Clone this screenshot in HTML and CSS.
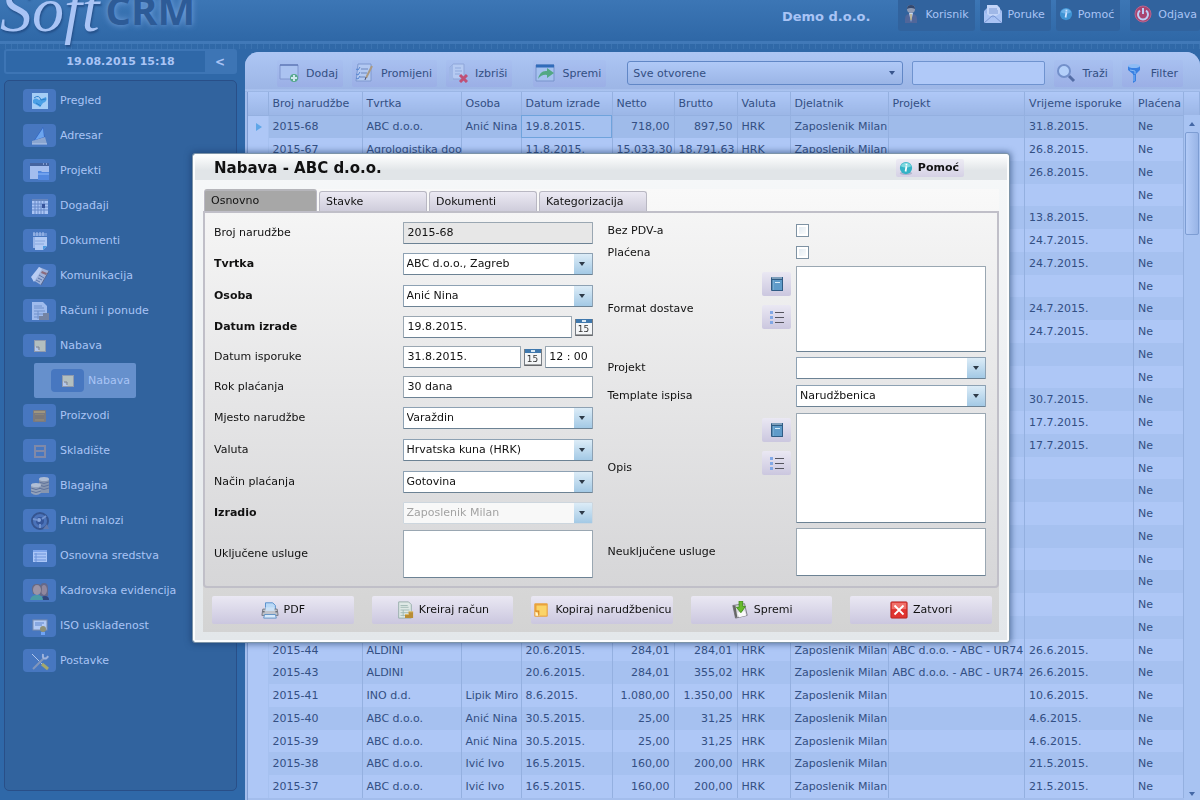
FILE: index.html
```html
<!DOCTYPE html>
<html lang="hr">
<head>
    <meta charset="UTF-8">
    <meta name="viewport" content="width=device-width, initial-scale=1.0">
    <title>SoftCRM</title>
    <link rel="stylesheet" href="styles.css">
</head>
<body>
    <!-- Shared icons -->
    <svg class="sprite" width="0" height="0" aria-hidden="true">
        <symbol id="i-info" viewBox="0 0 16 16"><ellipse cx="8" cy="14" rx="7" ry="2" fill="#8a93b5" opacity=".5"/><circle cx="8" cy="8" r="7" fill="#35b3c6"/><path d="M2 6a6.500 6.500 0 0 1 12 0Q8 9 2 6Z" fill="#7fd9e0"/><path d="M8.500 3v2M8.500 6l-1 6" stroke="#fff" stroke-width="2"/></symbol>
        <symbol id="i-order" viewBox="0 0 16 16"><rect x="2" y="2" width="12" height="12" rx="1" fill="#e9a23c"/><rect x="4" y="4" width="9" height="9" fill="#fbd468"/><path d="M3 13V9l4 4Z" fill="#fff4cf"/><path d="M3 9h3v4" stroke="#d98525" fill="none"/></symbol>
        <symbol id="i-bill" viewBox="0 0 20 20"><path d="M3 1h11l3 3v15H3Z" fill="#dfe9e6" stroke="#93aaa6"/><path d="M5 5h8M5 7h9M5 10h10M5 13h10M5 16h6M8 10v7" stroke="#9fb8b3" fill="none"/><path d="M10 19v-4h4v-3h5v7Z" fill="#b98d34"/><path d="M14 12h5M10 15h4" stroke="#e0bd66"/></symbol>
        <symbol id="i-book" viewBox="0 0 16 16"><path d="M2 2q0-1 1-1h11v14H3q-1 0-1-1Z" fill="#2f5c85"/><path d="M4 4h9v10H4Z" fill="#5f9bc9"/><path d="M3 2h10" stroke="#cfe2f2"/><path d="M6 6.500h5" stroke="#d6ecfa"/><path d="M4 4v10" stroke="#87bce0"/></symbol>
        <symbol id="i-list" viewBox="0 0 16 16"><path d="M1 2h3v3H1ZM1 7h3v3H1ZM1 12h3v3H1Z" fill="#82a8e6"/><path d="M6 3.500h9M6 8.500h9M6 13.500h9" stroke="#55555f"/></symbol>
        <symbol id="i-cal" viewBox="0 0 18 18"><rect x="0.500" y="1.500" width="17" height="16" fill="#f4f6f8" stroke="#777d84"/><path d="M1 1h16v4H1Z" fill="#3f78ad"/><path d="M7 2h4v2H7Z" fill="#d8e8f5"/><path d="M1 17h16" stroke="#555"/></symbol>
    </svg>

    <header class="topbar">
        <div class="logo"><span class="logo-soft">Soft</span><span class="logo-crm">CRM</span></div>
        <strong class="company">Demo d.o.o.</strong>
        <nav class="top-actions">
            <button class="top-btn">
                <svg viewBox="0 0 20 20"><circle cx="10" cy="5" r="4" fill="#8f9bb5"/><path d="M6 5q0-4 4-4t4 4q-4-2-8 0Z" fill="#33486e"/><path d="M4 19q-1-9 4-9h4q5 0 4 9Z" fill="#50669a"/><path d="M8 9h4l-2 9Z" fill="#c7d8f0"/><path d="M10 10v6" stroke="#b59a4e"/></svg>
                Korisnik
            </button>
            <button class="top-btn">
                <svg viewBox="0 0 20 20"><path d="M1 7l3-3V1h10l3 4 2 2v12H1Z" fill="#9bb7ec"/><path d="M4 1h10l3 3v8H4Z" fill="#c3d5f8"/><path d="M6 5h8M6 7h9M6 9h9" stroke="#7d9bd6"/><path d="M1 8l9 6 9-6v11H1Z" fill="#a9c3f4"/><path d="M1 19l8-7h2l8 7" stroke="#7896d2" fill="none"/></svg>
                Poruke
            </button>
            <button class="top-btn">
                <svg class="small" viewBox="0 0 16 16"><circle cx="8" cy="8" r="7" fill="#3f93d3"/><path d="M2 6a6.500 6.500 0 0 1 12 0Q8 9 2 6Z" fill="#6ab0e8"/><path d="M8.500 3v2M8.500 6l-1 6" stroke="#cfe2ff" stroke-width="2" fill="none"/></svg>
                Pomoć
            </button>
            <button class="top-btn logout">
                <svg viewBox="0 0 20 20"><circle cx="10" cy="10" r="8" fill="#a9446f" stroke="#b5648f"/><path d="M7 6.500a5 5 0 1 0 6 0M10 4v6" stroke="#bccdf6" stroke-width="2" fill="none"/></svg>
                Odjava
            </button>
        </nav>
    </header>

    <div class="layout">
        <aside class="sidebar">
            <div class="datebar">
                <time datetime="2015-08-19T15:18">19.08.2015 15:18</time>
                <button class="collapse">&lt;</button>
            </div>
            <nav class="menu">
                <a href="#"><span class="tile"><svg viewBox="0 0 20 20"><rect x="2" y="2" width="16" height="16" fill="#a5cdf6"/><path d="M3 9q3-3 6 0l7-3q2 4-3 6l-3 4-3-2-4-2Z" fill="#4aa0e6"/><path d="M4 7q5-4 7 2l5-1M6 12l5 3" stroke="#2c7fcb" fill="none"/></svg></span>Pregled</a>
                <a href="#"><span class="tile"><svg viewBox="0 0 20 20"><path d="M3 16L13 1l2 12Z" fill="#2e61c4"/><path d="M5 14l8-12 1 9Z" fill="#6ba4ee"/><path d="M2 15l13-4 2 7H2Z" fill="#8aa5d0"/><path d="M2 18h15" stroke="#b5c8ea"/></svg></span>Adresar</a>
                <a href="#"><span class="tile"><svg viewBox="0 0 20 20"><path d="M0 2h19v16H0Z" fill="#a3bdee"/><path d="M0 2h19v3H0Z" fill="#45649f"/><path d="M13 3h1M16 3h1" stroke="#c2d6ff"/><path d="M8 10h3l1 1h7v8H8Z" fill="#5288e0"/><path d="M8 13h11" stroke="#8eb9fa"/></svg></span>Projekti</a>
                <a href="#"><span class="tile"><svg viewBox="0 0 20 20"><rect x="2" y="3" width="16" height="15" fill="#a9c4f4"/><path d="M2 4h16" stroke="#6686bd" stroke-width="2"/><path d="M2 8h16M2 11h16M2 14h16M5 5v13M8 5v13M11 5v13M14 5v13" stroke="#6488c9"/><path d="M12 8h3v4h-3Z" fill="#37549a"/></svg></span>Događaji</a>
                <a href="#"><span class="tile"><svg viewBox="0 0 20 20"><path d="M3 2h14v3H3Z" fill="#7096d4"/><path d="M4 1v4M7 1v4M10 1v4M13 1v4" stroke="#afc6f0"/><path d="M3 6h7v11H3Z" fill="#96b4e8"/><path d="M5 6h12v9l-4 4H5Z" fill="#b0c9f4"/><path d="M5 10h10M5 13h9" stroke="#86a6de"/><path d="M13 19v-4h4Z" fill="#4d9be0"/></svg></span>Dokumenti</a>
                <a href="#"><span class="tile"><svg viewBox="0 0 20 20"><path d="M9 1l10 4-8 14L3 14Z" fill="#9fb2d9"/><path d="M1 11l8-10 3 2-8 13Z" fill="#b9cdf3"/><path d="M12 5l5 2-1 2-5-2Z" fill="#8b6b7d"/><path d="M9 9l5 3M8 12l4 2M6 14l4 2" stroke="#5b76ac"/><path d="M11 19l8-14" stroke="#55668e"/></svg></span>Komunikacija</a>
                <a href="#"><span class="tile"><svg viewBox="0 0 20 20"><path d="M2 1h11l4 4v14H2Z" fill="#9fbbed"/><path d="M4 5h8M4 7h10M4 10h11M4 13h11M4 16h6M8 10v8" stroke="#6f90cb" fill="none"/><path d="M9 19v-4h4v-3h6v7Z" fill="#7484a4"/></svg></span>Računi i ponude</a>
                <a href="#"><span class="tile"><svg viewBox="0 0 20 20"><rect x="4" y="4" width="12" height="12" fill="#8f9aae"/><rect x="5" y="5" width="10" height="10" fill="#b3bfbf"/><path d="M5 15v-5l5 5Z" fill="#b4c8ee"/><path d="M6 11h3v3" stroke="#7b8199" fill="none"/></svg></span>Nabava</a>
                <a href="#" class="sub"><span class="tile"><svg viewBox="0 0 20 20"><rect x="4" y="4" width="12" height="12" fill="#8f9aae"/><rect x="5" y="5" width="10" height="10" fill="#b3bfbf"/><path d="M5 15v-5l5 5Z" fill="#b4c8ee"/><path d="M6 11h3v3" stroke="#7b8199" fill="none"/></svg></span>Nabava</a>
                <a href="#"><span class="tile"><svg viewBox="0 0 20 20"><rect x="3" y="4" width="13" height="12" rx="1" fill="#7a7a80"/><path d="M4 5h11v2H4Z" fill="#9f967f"/><path d="M5 8h9v7H5Z" fill="#8a8479"/><path d="M5 10h9M5 12h9" stroke="#6c6c78"/></svg></span>Proizvodi</a>
                <a href="#"><span class="tile"><svg viewBox="0 0 20 20"><path d="M5 4v13M15 4v13M5 5h10M5 10h10M5 16h10" stroke="#8089a8" stroke-width="2" fill="none"/></svg></span>Skladište</a>
                <a href="#"><span class="tile"><svg viewBox="0 0 20 20"><path d="M9 3v14h10V3Z" fill="#8796b0"/><path d="M1 9v8q5 4 10 0V9Z" fill="#93a2bb"/><path d="M9 6q5 3 10 0M9 9q5 3 10 0M9 12q5 3 10 0M1 12q5 3 10 0M1 15q5 3 10 0" stroke="#61749c" fill="none"/><ellipse cx="14" cy="3" rx="5" ry="2" fill="#adbcd4"/><ellipse cx="6" cy="9" rx="5" ry="2" fill="#b1bfd5"/></svg></span>Blagajna</a>
                <a href="#"><span class="tile"><svg viewBox="0 0 20 20"><circle cx="10" cy="10" r="8" fill="#4a72b9" stroke="#35548f" stroke-width="2"/><circle cx="10" cy="10" r="4" fill="#35569a"/><circle cx="9" cy="9" r="2" fill="#86a5dd"/><path d="M3 8l5 1M12 8l4-3M10 13v4" stroke="#7192ce" stroke-width="2" fill="none"/><path d="M13 18l4-5 2 5Z" fill="#6179ac"/></svg></span>Putni nalozi</a>
                <a href="#"><span class="tile"><svg viewBox="0 0 20 20"><rect x="3" y="4" width="14" height="12" fill="#abc6f7"/><path d="M3 5h14" stroke="#7fa6ec" stroke-width="2"/><path d="M4 8h12M4 11h12M4 14h12M6 7v9" stroke="#6d94dc"/></svg></span>Osnovna sredstva</a>
                <a href="#"><span class="tile"><svg viewBox="0 0 20 20"><path d="M10 7q0-5 4-5t4 5v8h-8Z" fill="#65698a"/><ellipse cx="14" cy="9" rx="3" ry="5" fill="#91889e"/><path d="M11 19q0-4 4-4t4 4Z" fill="#30477c"/><path d="M2 8q0-5 5-5t5 5l-1 5H3Z" fill="#6a6980"/><ellipse cx="7" cy="9" rx="4" ry="5" fill="#9b94a7"/><path d="M0 19q1-5 7-5t6 5Z" fill="#4b9aa6"/></svg></span>Kadrovska evidencija</a>
                <a href="#"><span class="tile"><svg viewBox="0 0 20 20"><rect x="3" y="4" width="14" height="10" fill="#b2caf6" stroke="#7f8fae"/><path d="M5 7h9M5 9h7" stroke="#5d84ca"/><circle cx="13" cy="13" r="3" fill="#8f9178"/><path d="M12 16v3M14 16v3" stroke="#6fa4f4" stroke-width="2"/></svg></span>ISO usklađenost</a>
                <a href="#"><span class="tile"><svg viewBox="0 0 20 20"><path d="M2 3l11 11" stroke="#b0c4ea"/><path d="M12 13l6 5" stroke="#a5a86d" stroke-width="3"/><path d="M3 18L14 7" stroke="#8296bb" stroke-width="2"/><path d="M17 7q-5 2-4-4M17 7l1-2" stroke="#9fb3dc" stroke-width="2" fill="none"/></svg></span>Postavke</a>
            </nav>
        </aside>

        <main class="content">
            <div class="toolbar">
                <button class="tool">
                    <svg viewBox="0 0 20 20"><path d="M1 2h18v14H1Z" fill="#abc3f1" stroke="#8096cf"/><path d="M1 2h18" stroke="#4c67a8"/><circle cx="15" cy="15" r="4" fill="#57a98c"/><path d="M15 12v6M12 15h6" stroke="#cfe6ee" stroke-width="2"/></svg>
                    Dodaj
                </button>
                <button class="tool">
                    <svg viewBox="0 0 20 20"><path d="M4 1h13v17H2Z" fill="#b3c9f2" stroke="#7e98cf"/><path d="M2 6l2 1 2-3M2 11l2 1 2-3M2 15l2 1 2-3" stroke="#5585d1" fill="none"/><path d="M7 6h7M7 10h6M6 14h5" stroke="#6d87bd"/><path d="M18 3l-6 12" stroke="#ab9a82" stroke-width="2"/><path d="M12 14l-1 3" stroke="#4b5780"/></svg>
                    Promijeni
                </button>
                <button class="tool">
                    <svg viewBox="0 0 20 20"><path d="M5 1h11v15H5L2 4Z" fill="#b5caf2" stroke="#8ea5d8"/><path d="M1 5l4-4v17H1Z" fill="#9eb6e6"/><path d="M7 5h6M7 8h7M7 11h5" stroke="#8fa9dc"/><path d="M12 12l7 7M19 12l-7 7" stroke="#bf5077" stroke-width="3"/></svg>
                    Izbriši
                </button>
                <button class="tool save">
                    <svg viewBox="0 0 20 20"><path d="M1 2h18v16H1Z" fill="#a5c1ef" stroke="#7893cb"/><path d="M1 3h18" stroke="#316cba" stroke-width="3"/><path d="M3 16q2-9 9-8V5l7 5-7 5v-3q-5-1-9 4Z" fill="#52a884"/></svg>
                    Spremi
                </button>
                <div class="pick pick-filter">
                    <select aria-label="Pregled narudžbi"><option>Sve otvorene</option></select>
                </div>
                <input class="search" type="text" aria-label="Pojam za pretragu">
                <button class="tool">
                    <svg viewBox="0 0 20 20"><circle cx="8" cy="8" r="6" fill="#b4d0fa" stroke="#7390ca" stroke-width="2"/><path d="M13 13l5 5" stroke="#546da6" stroke-width="3"/></svg>
                    Traži
                </button>
                <button class="tool">
                    <svg viewBox="0 0 20 20"><path d="M4 3h12v4l-4 4v7l-3 2v-9L4 7Z" fill="#3880e2"/><ellipse cx="10" cy="3" rx="6" ry="2" fill="#8dbcf5"/><path d="M6 7l5 1v3M10 12v6" stroke="#86b8f5" fill="none"/></svg>
                    Filter
                </button>
            </div>

            <div class="grid-wrap">
                <table class="orders">
                    <colgroup>
                        <col class="c-mark"><col class="c-no"><col class="c-firm"><col class="c-person"><col class="c-date"><col class="c-net"><col class="c-gross"><col class="c-cur"><col class="c-staff"><col><col class="c-due"><col class="c-paid"><col class="c-scroll">
                    </colgroup>
                    <thead>
                        <tr><th></th><th>Broj narudžbe</th><th>Tvrtka</th><th>Osoba</th><th>Datum izrade</th><th>Netto</th><th>Brutto</th><th>Valuta</th><th>Djelatnik</th><th>Projekt</th><th>Vrijeme isporuke</th><th>Plaćena</th><th></th></tr>
                    </thead>
                    <tbody id="orderRows"></tbody>
                </table>
                <div class="scrollbar"><span class="arrow up"></span><span class="thumb"></span><span class="arrow down"></span></div>
            </div>
        </main>
    </div>

    <div class="overlay">
        <section class="dialog" role="dialog" aria-labelledby="dialogTitle">
            <header class="dialog-head">
                <h1 id="dialogTitle">Nabava - ABC d.o.o.</h1>
                <button class="help"><svg viewBox="0 0 16 16"><use href="#i-info"/></svg>Pomoć</button>
            </header>
            <div class="dialog-body">
                <div class="tabs">
                    <button class="tab active">Osnovno</button>
                    <button class="tab">Stavke</button>
                    <button class="tab">Dokumenti</button>
                    <button class="tab">Kategorizacija</button>
                </div>
                <form class="panel">
                    <div class="fields">
                        <div class="row"><label for="no">Broj narudžbe</label><input id="no" type="text" value="2015-68" readonly></div>
                        <div class="row row-pick"><label for="firm" class="req">Tvrtka</label><div class="pick"><select id="firm"><option>ABC d.o.o., Zagreb</option></select></div></div>
                        <div class="row row-pick"><label for="person" class="req">Osoba</label><div class="pick"><select id="person"><option>Anić Nina</option></select></div></div>
                        <div class="row"><label for="made" class="req">Datum izrade</label><div class="combo"><input id="made" type="text" value="19.8.2015."><button type="button" class="cal"><svg viewBox="0 0 18 18"><use href="#i-cal"/></svg><span>15</span></button></div></div>
                        <div class="row"><label for="due">Datum isporuke</label><div class="combo"><input id="due" type="text" value="31.8.2015."><button type="button" class="cal"><svg viewBox="0 0 18 18"><use href="#i-cal"/></svg><span>15</span></button><input class="time" type="text" value="12 : 00" aria-label="Vrijeme isporuke"></div></div>
                        <div class="row"><label for="term">Rok plaćanja</label><input id="term" type="text" value="30 dana"></div>
                        <div class="row row-pick"><label for="place">Mjesto narudžbe</label><div class="pick"><select id="place"><option>Varaždin</option></select></div></div>
                        <div class="row row-pick"><label for="cur">Valuta</label><div class="pick"><select id="cur"><option>Hrvatska kuna (HRK)</option></select></div></div>
                        <div class="row row-pick"><label for="pay">Način plaćanja</label><div class="pick"><select id="pay"><option>Gotovina</option></select></div></div>
                        <div class="row"><label for="author" class="req">Izradio</label><div class="pick disabled"><select id="author" disabled><option>Zaposlenik Milan</option></select></div></div>
                        <div class="row row-note"><label for="incl">Uključene usluge</label><textarea id="incl"></textarea></div>
                    </div>
                    <div class="fields fields-extra">
                        <div class="row row-check"><label for="novat">Bez PDV-a</label><div><input id="novat" type="checkbox"></div></div>
                        <div class="row row-check"><label for="paid">Plaćena</label><div><input id="paid" type="checkbox"></div></div>
                        <div class="row row-text">
                            <label for="format">Format dostave</label>
                            <div class="side-btns">
                                <button type="button" aria-label="Predlošci"><svg viewBox="0 0 16 16"><use href="#i-book"/></svg></button>
                                <button type="button" aria-label="Popis"><svg viewBox="0 0 16 16"><use href="#i-list"/></svg></button>
                            </div>
                            <textarea id="format"></textarea>
                        </div>
                        <div class="row row-short"><label for="project">Projekt</label><div class="pick"><select id="project"><option></option></select></div></div>
                        <div class="row row-short"><label for="tpl">Template ispisa</label><div class="pick"><select id="tpl"><option>Narudžbenica</option></select></div></div>
                        <div class="row row-text tall">
                            <label for="desc">Opis</label>
                            <div class="side-btns">
                                <button type="button" aria-label="Predlošci"><svg viewBox="0 0 16 16"><use href="#i-book"/></svg></button>
                                <button type="button" aria-label="Popis"><svg viewBox="0 0 16 16"><use href="#i-list"/></svg></button>
                            </div>
                            <textarea id="desc"></textarea>
                        </div>
                        <div class="row row-note"><label for="excl">Neuključene usluge</label><textarea id="excl"></textarea></div>
                    </div>
                </form>
                <div class="actions">
                    <button><svg viewBox="0 0 20 20"><path d="M5 2h8l3 3v6H5Z" fill="#b9d8f6" stroke="#4f8bc9"/><path d="M2 9h16l1 7H1Z" fill="#c0c4cc" stroke="#71757f"/><path d="M5 11h10v-4H5Z" fill="#cbe1f7"/><path d="M4 15h12l1 4H3Z" fill="#d8e9fa" stroke="#5a8fc4"/><path d="M2 12h2M16 12h2" stroke="#3b3f47"/></svg>PDF</button>
                    <button><svg viewBox="0 0 20 20"><use href="#i-bill"/></svg>Kreiraj račun</button>
                    <button><svg viewBox="0 0 16 16"><use href="#i-order"/></svg>Kopiraj narudžbenicu</button>
                    <button><svg viewBox="0 0 20 20"><path d="M2 5l13-2 3 13-13 3Z" fill="#dcdce0" stroke="#77777f"/><path d="M2 5l3 14 2-1L5 5Z" fill="#666"/><path d="M7 13l8-2 2 5-8 2Z" fill="#fafafa"/><path d="M9 0h4v6h3l-5 7-5-6h3Z" fill="#68bb2c" stroke="#3f8d1b"/></svg>Spremi</button>
                    <button><svg viewBox="0 0 20 20"><rect x="1" y="1" width="18" height="18" rx="1" fill="#e03430" stroke="#b3231f"/><path d="M2 2h16v7H2Z" fill="#f0706a"/><path d="M5 5l10 10M15 5L5 15" stroke="#fff" stroke-width="2"/></svg>Zatvori</button>
                </div>
            </div>
        </section>
    </div>

    <script>
        // number, company, person, created, net, gross, currency, staff, project, due
        const orders = [
            ["2015-68", "ABC d.o.o.", "Anić Nina", "19.8.2015.", "718,00", "897,50", "HRK", "Zaposlenik Milan", "", "31.8.2015."],
            ["2015-67", "Agrologistika doo", "", "11.8.2015.", "15.033,30", "18.791,63", "HRK", "Zaposlenik Milan", "", "26.8.2015."]
        ];

        const dueDates = ["26.8.2015.", "", "13.8.2015.", "24.7.2015.", "24.7.2015.", "", "24.7.2015.", "24.7.2015.", "", "", "30.7.2015.", "17.7.2015.", "17.7.2015.", "", "", "", "", "", "", "", ""];
        dueDates.forEach(due => orders.push(["", "", "", "", "", "", "", "", "", due]));

        orders.push(
            ["2015-44", "ALDINI", "", "20.6.2015.", "284,01", "284,01", "HRK", "Zaposlenik Milan", "ABC d.o.o. - ABC - UR74", "26.6.2015."],
            ["2015-43", "ALDINI", "", "20.6.2015.", "284,01", "355,02", "HRK", "Zaposlenik Milan", "ABC d.o.o. - ABC - UR74", "26.6.2015."],
            ["2015-41", "INO d.d.", "Lipik Miro", "8.6.2015.", "1.080,00", "1.350,00", "HRK", "Zaposlenik Milan", "", "10.6.2015."],
            ["2015-40", "ABC d.o.o.", "Anić Nina", "30.5.2015.", "25,00", "31,25", "HRK", "Zaposlenik Milan", "", "4.6.2015."],
            ["2015-39", "ABC d.o.o.", "Anić Nina", "30.5.2015.", "25,00", "31,25", "HRK", "Zaposlenik Milan", "", "4.6.2015."],
            ["2015-38", "ABC d.o.o.", "Ivić Ivo", "16.5.2015.", "160,00", "200,00", "HRK", "Zaposlenik Milan", "", "21.5.2015."],
            ["2015-37", "ABC d.o.o.", "Ivić Ivo", "16.5.2015.", "160,00", "200,00", "HRK", "Zaposlenik Milan", "", "21.5.2015."]
        );

        document.getElementById("orderRows").innerHTML = orders.map(order =>
            `<tr><td></td>${order.map(cell => `<td>${cell}</td>`).join("")}<td>Ne</td><td></td></tr>`
        ).join("");
    </script>
</body>
</html>
```
FILE: styles.css
```css
:root {
    --page: #2f68a8;
    --panel: #31639e;
    --tile: #4777c0;
    --pale: #a9c4f5;
    --ink: #334f83;
    --row: #aec7f6;
    --row-alt: #a6c1f0;
    --line: #94b0e0;
    --lilac: linear-gradient(#eae8f3, #cbc7df);
}

* {
    box-sizing: border-box;
    margin: 0;
    padding: 0;
}

body {
    font-family: 'DejaVu Sans', Verdana, sans-serif;
    font-size: 11px;
    color: #111;
    background: var(--page);
    height: 100vh;
    display: flex;
    flex-direction: column;
    overflow: hidden;
}

button, input, select, textarea {
    font: inherit;
    color: inherit;
}

button {
    border: none;
    cursor: pointer;
}

.sprite {
    position: absolute;
}

/* Top bar */
.topbar {
    height: 49px;
    display: flex;
    align-items: flex-start;
    background:
        repeating-linear-gradient(90deg, transparent 0 5px, rgba(70, 125, 185, 0.5) 5px 6px) 0 44px / 100% 5px no-repeat,
        linear-gradient(#4179b8, #4179b8) 0 41px / 100% 3px no-repeat,
        linear-gradient(#3c76b5, #2f68a7 40px, #3069a8);
    color: var(--pale);
}

.logo {
    display: flex;
    align-items: flex-start;
    gap: 6px;
    height: 49px;
    line-height: 1;
    margin-top: -22px;
    white-space: nowrap;
}

.logo-soft {
    font-family: 'Liberation Serif', serif;
    font-style: italic;
    font-size: 64px;
    text-shadow: 1px 2px 2px #24508a;
}

.logo-crm {
    margin-top: 12px;
    font-family: 'Open Sans', sans-serif;
    font-weight: 700;
    font-size: 40px;
    color: #2d5b97;
    text-shadow: 0 0 6px #78a5e0;
}

.company {
    font-size: 13px;
    line-height: 34px;
    margin-left: auto;
}

.top-actions {
    display: flex;
    gap: 5px;
    padding: 0 0 0 27px;
}

.top-btn {
    display: flex;
    align-items: center;
    gap: 5px;
    height: 28px;
    padding: 0 6px 0 3px;
    background: var(--panel);
    border-radius: 0 0 3px 3px;
    box-shadow: 0 3px 0 var(--panel);
}

.top-btn svg {
    width: 20px;
    height: 20px;
}

.top-btn svg.small {
    width: 14px;
    height: 14px;
}

.top-btn.logout {
    margin-left: 5px;
    padding-right: 3px;
}

/* Sidebar */
.layout {
    flex: 1;
    display: flex;
    min-height: 0;
}

.sidebar {
    width: 245px;
    padding: 0 8px 9px 4px;
    display: flex;
    flex-direction: column;
    gap: 6px;
    color: var(--pale);
}

.datebar {
    display: flex;
    height: 25px;
    border: 2px solid #3d75b5;
    border-radius: 3px;
    font-weight: 700;
    flex: none;
}

.datebar time {
    flex: 1;
    line-height: 21px;
    text-align: center;
    padding-left: 30px;
}

.collapse {
    width: 30px;
    background: #3d75b5;
    font-weight: 700;
    font-size: 12px;
}

.menu {
    flex: 1;
    background: var(--panel);
    border: 1px solid #294f88;
    border-radius: 5px;
    padding: 2px 18px;
}

.menu a {
    display: flex;
    align-items: center;
    gap: 4px;
    height: 35px;
    color: var(--pale);
    text-decoration: none;
}

.tile {
    width: 33px;
    height: 23px;
    background: var(--tile);
    border-radius: 4px;
    display: grid;
    place-items: center;
}

.tile svg {
    width: 20px;
    height: 20px;
}

.menu .sub {
    width: fit-content;
    margin-left: 11px;
    padding: 0 6px 0 17px;
    background: #6690cc;
    border-radius: 2px;
}

/* Order list */
.content {
    flex: 1;
    min-width: 0;
    margin-top: 3px;
    display: flex;
    flex-direction: column;
    background: #a3bdec;
    border-radius: 14px 14px 0 0;
    color: var(--ink);
    overflow: hidden;
}

.toolbar {
    height: 40px;
    flex: none;
    display: flex;
    align-items: center;
    gap: 9px;
    padding: 2px 17px 0 32px;
    background: linear-gradient(#adc6f4, #9db6e6 37px, #b1c9f5 38px, #94b0e0);
}

.tool {
    display: flex;
    align-items: center;
    gap: 7px;
    height: 27px;
    padding: 0 5px 0 2px;
    background: linear-gradient(#a8c0f0, #9bafe6);
    border-radius: 2px;
    white-space: nowrap;
}

.tool svg {
    width: 20px;
    height: 20px;
}

.tool.save {
    margin: 0 12px 0 12px;
}

.search {
    width: 133px;
    height: 24px;
    padding: 0 4px;
    background: #b0c9f8;
    border: 1px solid #6f93cf;
    border-radius: 2px;
}

.pick {
    display: grid;
    grid-template-columns: 1fr 19px;
    align-items: center;
    height: 22px;
    background: #fff;
    border: 1px solid #8da1b3;
    border-bottom-color: #6c8294;
    border-radius: 1px;
}

.pick select {
    grid-area: 1 / 1 / 2 / 3;
    width: 100%;
    height: 20px;
    padding: 0 22px 0 3px;
    appearance: none;
    border: none;
    border-radius: 0;
    background: linear-gradient(#dcecf7, #a3c9e5) right / 18px 100% no-repeat;
    opacity: 1;
}

.pick::after {
    content: '';
    grid-area: 1 / 2 / 2 / 3;
    justify-self: center;
    border: 3px solid transparent;
    border-top: 4px solid #2d3a48;
    border-bottom: none;
    pointer-events: none;
}

.pick-filter {
    flex: 1;
    height: 24px;
    background: linear-gradient(#b0c9f7, #9bb5e6);
    border: 1px solid #6187c6;
    border-radius: 3px;
}

.pick-filter select {
    background: none;
    padding-left: 5px;
}

.pick-filter::after {
    border-top-color: #38558c;
}

.grid-wrap {
    flex: 1;
    min-height: 0;
    display: grid;
    margin-left: 2px;
    border-left: 1px solid #7f9dd3;
    overflow: hidden;
}

.orders {
    grid-area: 1 / 1;
    align-self: start;
    width: 100%;
    table-layout: fixed;
    border-collapse: collapse;
}

.c-mark { width: 20px; }
.c-no { width: 94px; }
.c-firm { width: 99px; }
.c-person { width: 60px; }
.c-date { width: 91px; }
.c-net { width: 62px; }
.c-gross { width: 63px; }
.c-cur { width: 53px; }
.c-staff { width: 98px; }
.c-due { width: 109px; }
.c-paid { width: 50px; }
.c-scroll { width: 16px; }

.orders th {
    height: 23px;
    padding: 0 1px 0 4px;
    font-weight: 400;
    text-align: left;
    background: linear-gradient(#afc8f7, #9bb6e6);
    border-right: 1px solid var(--line);
    border-bottom: 1px solid var(--line);
    white-space: nowrap;
}

.orders td {
    height: 23px;
    padding: 0 1px 0 4px;
    line-height: 13px;
    border-right: 1px solid var(--line);
    white-space: nowrap;
}

/* Keeps the average row pitch just under 23px */
.orders tr:nth-child(4n) td {
    height: 22px;
}

.orders tbody tr {
    background: var(--row);
}

.orders tbody tr:nth-child(odd) {
    background: var(--row-alt);
}

.orders tbody tr:first-child {
    background: #9fbbea;
}

.orders td:first-child {
    background: var(--row);
    border-right-color: #a6c1f0;
}

.orders tbody tr:first-child td:first-child::before {
    content: '';
    display: block;
    width: 0;
    margin-left: 4px;
    border: 4px solid transparent;
    border-left: 6px solid #5ea6e8;
    border-right: none;
}

.orders tbody tr:first-child td:nth-child(5) {
    background: #a5c1f0;
    outline: 1px solid #6fa3dc;
    outline-offset: -1px;
}

.orders td:nth-child(6),
.orders td:nth-child(7) {
    padding-right: 4px;
    text-align: right;
}

.scrollbar {
    grid-area: 1 / 1;
    justify-self: end;
    width: 16px;
    margin-top: 23px;
    padding: 7px 2px 4px 1px;
    display: flex;
    flex-direction: column;
    align-items: center;
    gap: 6px;
    background: #a8c3f2;
}

.thumb {
    width: 14px;
    height: 103px;
    background: linear-gradient(90deg, #b3cbf7, #98b4e6);
    border: 1px solid #7d9dd3;
    border-radius: 2px;
}

.arrow {
    border: 3px solid transparent;
    border-top: none;
    border-bottom: 4px solid #4468a6;
}

.arrow.down {
    margin-top: auto;
    transform: rotate(180deg);
}

/* Order dialog */
.overlay {
    position: fixed;
    inset: 0;
    display: grid;
    place-items: center;
    padding: 0 0 5px 2px;
}

.dialog {
    width: 68%;
    min-width: 816px;
    background: linear-gradient(#f6f8f9, #e3e7ea);
    border: 2px solid #fcfdfd;
    border-radius: 2px;
    outline: 1px solid #7d94a8;
    box-shadow: 0 0 6px 2px rgba(25, 55, 100, 0.6);
}

.dialog-head {
    height: 24px;
    display: flex;
    align-items: center;
    justify-content: space-between;
    padding: 0 43px 0 19px;
    background: linear-gradient(#fcfdfd, #e1e5e8 60%);
}

.dialog-head h1 {
    font-size: 15px;
}

.help {
    display: flex;
    align-items: center;
    gap: 5px;
    height: 18px;
    padding: 0 5px 0 3px;
    background: linear-gradient(#edecf4, #d5d1e5);
    border-radius: 2px;
    font-weight: 700;
}

.help svg {
    width: 14px;
    height: 14px;
}

.dialog-body {
    margin: 9px 8px 8px;
    background: linear-gradient(#f9f9f9, #d3d3d3);
}

.tabs {
    display: flex;
    align-items: flex-end;
    gap: 2px;
    padding: 0 1px;
}

.tab {
    width: 108px;
    height: 20px;
    padding: 0 6px;
    text-align: left;
    background: linear-gradient(#ebe9f3, #cfcddb);
    border: 1px solid #b9b8c3;
    border-bottom: none;
    border-radius: 3px 3px 0 0;
}

.tab.active {
    width: 113px;
    height: 22px;
    background: #a7a7a7;
    border-top: 2px solid #b5b5ba;
}

.panel {
    display: grid;
    grid-template-columns: 1fr 1fr;
    gap: 15px;
    padding: 5px 11px 6px 9px;
    border: 2px solid #c0bfc8;
    border-radius: 0 0 4px 4px;
    background: linear-gradient(#f5f5f5, #d6d6d8);
}

.fields-extra {
    padding-top: 2px;
}

.row {
    height: 30px;
    display: grid;
    grid-template-columns: 1fr 190px;
    align-items: center;
}

.row-pick { height: 32px; }
.row-short { height: 28px; }
.row-check { height: 22px; }
.row-note { height: 52px; }

.row-text {
    height: 90px;
    grid-template-columns: 1fr 34px 190px;
}

.row-text.tall {
    height: 116px;
}

.req {
    font-weight: 700;
}

.row input[type="text"],
.row textarea {
    width: 100%;
    min-width: 0;
    height: 22px;
    padding: 0 4px;
    background: #fff;
    border: 1px solid #9aa7b2;
    border-bottom-color: #6c8294;
    border-radius: 1px;
}

.row input[readonly] {
    background: #e7e7e7;
}

.row textarea {
    display: block;
    height: 48px;
    resize: none;
}

.row-text textarea {
    height: 86px;
}

.tall textarea {
    height: 110px;
}

.row input[type="checkbox"] {
    display: block;
    appearance: none;
    width: 13px;
    height: 13px;
    background: linear-gradient(135deg, #dde7ef, #fff);
    border: 1px solid #7e92a3;
    box-shadow: inset 0 0 0 2px #fff;
}

.disabled {
    border-color: #cdd6de;
    background: #f8f8f8;
}

.disabled select {
    color: #a3a3a3;
}

.combo {
    display: flex;
    align-items: center;
    gap: 3px;
}

.row .combo .time {
    width: 48px;
    padding: 0 1px;
    text-align: center;
    flex: none;
}

.cal {
    flex: none;
    display: grid;
    width: 18px;
    height: 18px;
    background: none;
}

.cal svg,
.cal span {
    grid-area: 1 / 1;
}

.cal span {
    padding-top: 6px;
    font-size: 9px;
    line-height: 11px;
    color: #333;
}

.side-btns {
    align-self: start;
    padding-top: 8px;
    display: grid;
    gap: 9px;
}

.side-btns button {
    width: 29px;
    height: 24px;
    display: grid;
    place-items: center;
    background: var(--lilac);
    border-radius: 2px;
}

.side-btns svg {
    width: 16px;
    height: 16px;
}

.actions {
    display: flex;
    justify-content: space-between;
    gap: 18px;
    padding: 8px 7px 8px 9px;
}

.actions button {
    flex: 1;
    height: 28px;
    display: flex;
    align-items: center;
    justify-content: center;
    gap: 5px;
    background: var(--lilac);
    border-radius: 2px;
    white-space: nowrap;
}

.actions svg {
    width: 18px;
    height: 18px;
}
```
